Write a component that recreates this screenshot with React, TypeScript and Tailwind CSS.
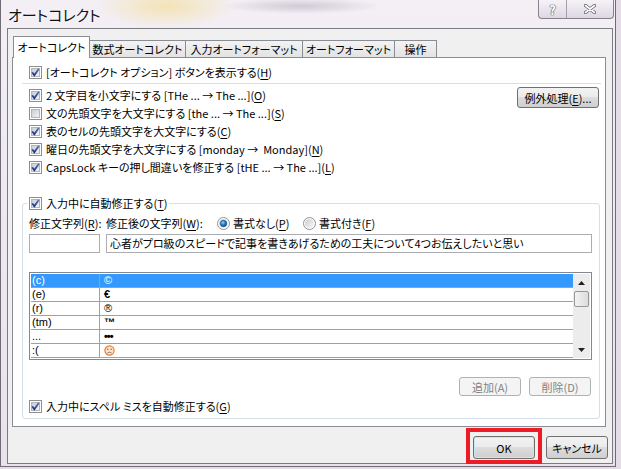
import React from "react";

const font = "font-['Noto_Sans_CJK_JP',sans-serif] [font-feature-settings:'palt']";

const K = ({ c }: { c: string }) => <u className="underline-offset-[2px]">{c}</u>;

function CheckBox({ checked = true }: { checked?: boolean }) {
  return (
    <svg width="13" height="13" viewBox="0 0 13 13" className="shrink-0">
      <defs>
        <linearGradient id="cbfill" x1="0" y1="0" x2="1" y2="1">
          <stop offset="0" stopColor="#c6cad0" />
          <stop offset="1" stopColor="#f6f6f6" />
        </linearGradient>
        <linearGradient id="cbchk" x1="0" y1="0" x2="0" y2="1">
          <stop offset="0" stopColor="#5a7ccf" />
          <stop offset="1" stopColor="#1c3378" />
        </linearGradient>
      </defs>
      <rect x="0.5" y="0.5" width="12" height="12" fill="#fff" stroke="#8e8f8f" />
      <rect x="2.5" y="2.5" width="8" height="8" fill="url(#cbfill)" stroke="#b3b7bc" />
      {checked && (
        <path d="M3.2 6.3 L5.3 9.2 L9.9 2.8" fill="none" stroke="url(#cbchk)" strokeWidth="1.9" />
      )}
    </svg>
  );
}

function Radio({ checked = false }: { checked?: boolean }) {
  return (
    <svg width="13" height="13" viewBox="0 0 13 13" className="shrink-0">
      <defs>
        <linearGradient id="rdfill" x1="0" y1="0" x2="1" y2="1">
          <stop offset="0" stopColor="#c8ccd2" />
          <stop offset="1" stopColor="#f8f8f8" />
        </linearGradient>
        <radialGradient id="rddot" cx="0.4" cy="0.35" r="0.7">
          <stop offset="0" stopColor="#8fd8ff" />
          <stop offset="0.5" stopColor="#1a86d0" />
          <stop offset="1" stopColor="#0b3f7a" />
        </radialGradient>
      </defs>
      <circle cx="6.5" cy="6.5" r="6" fill="#fff" stroke="#8e8f8f" />
      <circle cx="6.5" cy="6.5" r="4.5" fill="url(#rdfill)" />
      {checked && <circle cx="6.5" cy="6.5" r="3.2" fill="url(#rddot)" stroke="#12477f" strokeWidth="0.6" />}
    </svg>
  );
}

function CheckRow({ checked = true, children }: { checked?: boolean; children: React.ReactNode }) {
  return (
    <div className="flex h-[18px] items-center whitespace-nowrap">
      <CheckBox checked={checked} />
      <span className="ml-[4px]">{children}</span>
    </div>
  );
}

const btn =
  "flex items-center justify-center rounded-[3px] border border-[#707070] bg-[linear-gradient(#f2f2f2_0%,#ebebeb_50%,#dddddd_50%,#cfcfcf_100%)] whitespace-nowrap";
const btnOff =
  "flex items-center justify-center rounded-[3px] border border-[#adb2b5] bg-[#f4f4f4] text-[#838383] whitespace-nowrap";
const tabOff =
  "flex h-[17px] items-center justify-center whitespace-nowrap border-r border-t border-[#898c95] bg-[linear-gradient(#f3f3f3,#e3e3e3)] leading-[16px]";

function Frown() {
  return (
    <svg width="11" height="11" viewBox="0 0 11 11">
      <circle cx="5.5" cy="5.5" r="4.6" fill="#fde3c8" stroke="#f07a2a" strokeWidth="1.2" />
      <circle cx="3.8" cy="4.3" r="0.7" fill="#666" />
      <circle cx="7.2" cy="4.3" r="0.7" fill="#666" />
      <path d="M3.4 8 Q5.5 6.2 7.6 8" fill="none" stroke="#777" strokeWidth="0.9" />
    </svg>
  );
}

const rows: [string, React.ReactNode][] = [
  ["(c)", "©"],
  ["(e)", <span className="font-bold">€</span>],
  ["(r)", "®"],
  ["(tm)", <span className="font-bold">™</span>],
  ["...", <span className="font-bold tracking-[-1px]">•••</span>],
  [":(", <Frown />],
];

export default function App() {
  return (
    <div className={`w-[621px] h-[469px] overflow-hidden bg-[#e4dde8] text-[11px] leading-[18px] text-black ${font}`}>
      <div className="flex w-[616px] h-[467px] flex-col border-x border-b border-[#6f6c75] bg-[linear-gradient(180deg,#f3eff5,#e8e2ec)]">
        {/* title bar */}
        <div className="flex h-[28px] shrink-0 items-start bg-[radial-gradient(ellipse_70px_22px_at_165px_6px,#f3e3b4_0%,rgba(243,227,180,0)_100%),radial-gradient(ellipse_80px_8px_at_300px_6px,#cfcad4_0%,rgba(207,202,212,0)_100%)]">
          <div className="pl-[7px] pt-[5px] text-[15px] leading-[20px] text-[#111] [text-shadow:0_0_6px_#fff]">
            オートコレクト
          </div>
          <div className="ml-auto mr-[1px] flex h-[19px] overflow-hidden rounded-b-[4px] border border-t-0 border-[#85828b] bg-[linear-gradient(180deg,#f6f3f8,#ddd7e3)]">
            <div className="flex w-[28px] items-center justify-center border-r border-[#a29fa8] text-[13px] font-bold leading-none text-white [text-shadow:0_0_1px_#555,0_0_1px_#555,0_0_1px_#555]">
              ?
            </div>
            <div className="flex w-[46px] items-center justify-center">
              <svg width="12" height="10" viewBox="0 0 12 10">
                <path d="M1.5 1.5 L10.5 8.5 M10.5 1.5 L1.5 8.5" stroke="#6a6770" strokeWidth="3.4" strokeLinecap="round" />
                <path d="M1.5 1.5 L10.5 8.5 M10.5 1.5 L1.5 8.5" stroke="#ffffff" strokeWidth="1.6" strokeLinecap="round" />
              </svg>
            </div>
          </div>
        </div>

        {/* client area */}
        <div className="ml-[6px] h-[436px] w-[606px] border border-[#7b7b83] bg-[#f0f0f0]">
          {/* tabs */}
          <div className="flex items-end pl-[5px] pt-[7px]">
            <div className="relative z-10 -mb-px flex h-[22px] w-[77px] items-center justify-center whitespace-nowrap border-x border-t border-[#898c95] bg-white pb-[2px]">
              オートコレクト
            </div>
            <div className={`${tabOff} w-[96px]`}>数式オートコレクト</div>
            <div className={`${tabOff} w-[117px]`}>入力オートフォーマット</div>
            <div className={`${tabOff} w-[92px]`}>オートフォーマット</div>
            <div className={`${tabOff} w-[42px]`}>操作</div>
          </div>

          {/* panel */}
          <div className="ml-[4px] flex h-[370px] w-[594px] flex-col border border-[#898c95] bg-white">
            <div className="mt-[5px] pl-[16px]">
              <CheckRow>
                [オートコレクト オプション] ボタンを表示する(<K c="H" />)
              </CheckRow>
            </div>
            <div className="ml-[9px] mr-[4px] mt-[2px] h-px bg-[#d5dfe5]" />

            <div className="mt-[2px] flex">
              <div className="flex flex-col pl-[16px]">
                <CheckRow>
                  2 文字目を小文字にする [THe ... → The ...](<K c="O" />)
                </CheckRow>
                <CheckRow checked={false}>
                  文の先頭文字を大文字にする [the ... → The ...](<K c="S" />)
                </CheckRow>
                <CheckRow>
                  表のセルの先頭文字を大文字にする(<K c="C" />)
                </CheckRow>
                <CheckRow>
                  曜日の先頭文字を大文字にする [monday →&nbsp; Monday](<K c="N" />)
                </CheckRow>
                <CheckRow>
                  CapsLock キーの押し間違いを修正する [tHE ... → The ...](<K c="L" />)
                </CheckRow>
              </div>
              <div className={`${btn} ml-auto mr-[6px] mt-[1px] h-[21px] w-[82px]`}>
                <span>
                  例外処理(<K c="E" />)...
                </span>
              </div>
            </div>

            <fieldset className="ml-[9px] mt-[18px] w-[578px] rounded-[3px] border border-[#d5dfe5] pb-[3px]">
              <legend className="ml-[4px] px-[2px]">
                <CheckRow>
                  入力中に自動修正する(<K c="T" />)
                </CheckRow>
              </legend>
              <div className="pl-[6px]">
                <div className="mt-[2px] flex h-[18px] items-center whitespace-nowrap">
                  <span className="w-[77px]">
                    修正文字列(<K c="R" />):
                  </span>
                  <span className="w-[111px]">
                    修正後の文字列(<K c="W" />):
                  </span>
                  <span className="flex w-[86px] items-center">
                    <Radio checked />
                    <span className="ml-[3px]">
                      書式なし(<K c="P" />)
                    </span>
                  </span>
                  <span className="flex items-center">
                    <Radio />
                    <span className="ml-[3px]">
                      書式付き(<K c="F" />)
                    </span>
                  </span>
                </div>

                <div className="mt-[2px] flex h-[19px]">
                  <div className="w-[71px] border border-[#abadb3] bg-white" />
                  <div className="ml-[6px] w-[486px] overflow-hidden whitespace-nowrap border border-[#abadb3] bg-white pl-[3px] leading-[17px]">
                    心者がプロ級のスピードで記事を書きあげるための工夫について4つお伝えしたいと思い
                  </div>
                </div>

                <div className="mt-[19px] flex h-[88px] w-[563px] border border-[#828790] bg-white p-[1px] font-['Liberation_Sans',sans-serif] text-[11px]">
                  <div className="flex flex-1 flex-col">
                    {rows.map(([a, b], i) => (
                      <div
                        key={i}
                        className={`flex h-[14px] border-b border-[#a0a0a0] leading-[13px] ${
                          i === 0 ? "bg-[#3399ff] text-white" : ""
                        }`}
                      >
                        <div className="w-[69px] border-r border-[#a0a0a0] pl-[1px]">{a}</div>
                        <div className="flex items-center pl-[4px]">{b}</div>
                      </div>
                    ))}
                  </div>
                  <div className="flex w-[17px] flex-col items-center bg-[#ececec]">
                    <div className="flex h-[17px] items-center justify-center">
                      <svg width="7" height="4" viewBox="0 0 7 4">
                        <path d="M0 4 L3.5 0 L7 4 Z" fill="#222" />
                      </svg>
                    </div>
                    <div className="h-[16px] w-[15px] rounded-[2px] border border-[#979797] bg-[linear-gradient(90deg,#f3f3f3,#dcdcdc)]" />
                    <div className="mt-auto flex h-[17px] items-center justify-center">
                      <svg width="7" height="4" viewBox="0 0 7 4">
                        <path d="M0 0 L7 0 L3.5 4 Z" fill="#222" />
                      </svg>
                    </div>
                  </div>
                </div>

                <div className="mt-[17px] flex h-[19px] justify-end gap-[8px] pr-[8px]">
                  <div className={`${btnOff} w-[62px]`}>追加(A)</div>
                  <div className={`${btnOff} w-[62px]`}>削除(D)</div>
                </div>

                <div className="mt-[1px]">
                  <CheckRow>
                    入力中にスペル ミスを自動修正する(<K c="G" />)
                  </CheckRow>
                </div>
              </div>
            </fieldset>
          </div>

          {/* footer buttons */}
          <div className="mt-[1px] flex items-start justify-end gap-[4px] pr-[4px]">
            <div className="flex h-[36px] w-[76px] justify-center border-[4px] border-[#ed1c24] pt-[4px]">
              <div className={`${btn} h-[23px] w-[62px] border-[#3c7fb1] shadow-[inset_0_0_0_1px_#c7e6f8]`}>OK</div>
            </div>
            <div className={`${btn} mt-[8px] h-[23px] w-[62px]`}>キャンセル</div>
          </div>
        </div>
      </div>
    </div>
  );
}
